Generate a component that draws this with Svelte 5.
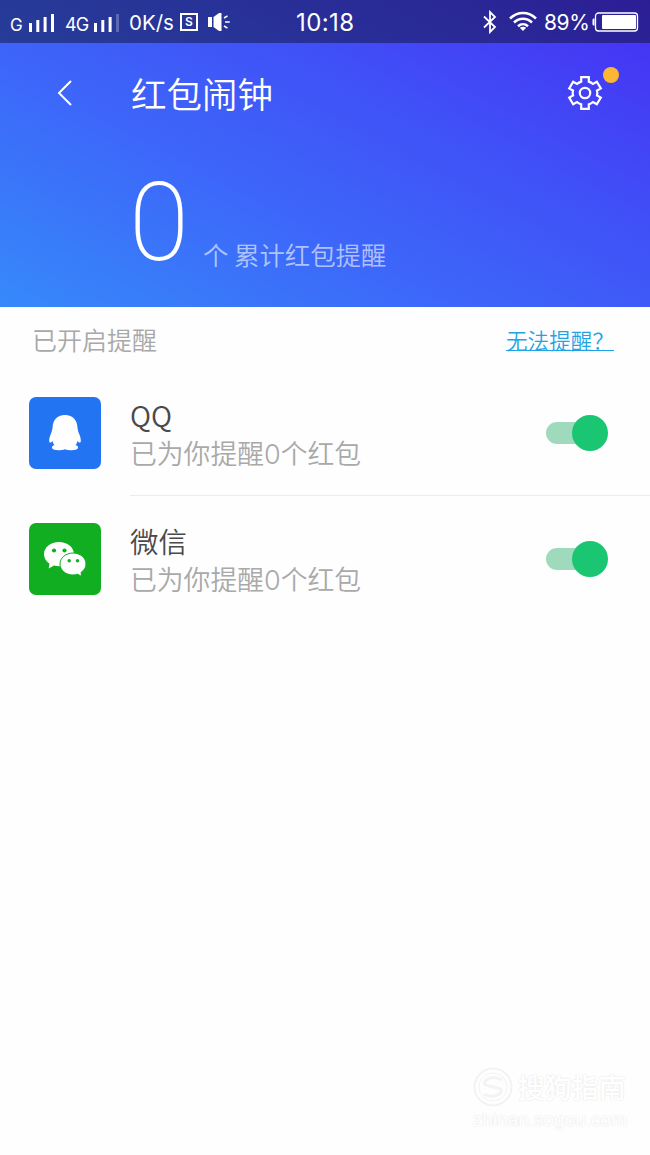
<script lang="ts">
	type App = {
		id: string;
		name: string;
		count: number;
		enabled: boolean;
	};

	let apps = $state<App[]>([
		{ id: 'qq', name: 'QQ', count: 0, enabled: true },
		{ id: 'wechat', name: '微信', count: 0, enabled: true }
	]);

	const total = $derived(apps.reduce((sum, app) => sum + app.count, 0));

	function toggle(app: App) {
		app.enabled = !app.enabled;
	}
</script>

<div class="screen">
	<header class="hero">
		<div class="status-bar">
			<div class="status-left">
				<span class="network">G</span>
				<svg class="signal" width="26" height="18" viewBox="0 0 26 18" fill="#fff">
					<rect x="0" y="9" width="3" height="9" />
					<rect x="7.3" y="6" width="3" height="12" />
					<rect x="14.6" y="3" width="3" height="15" />
					<rect x="22" y="0" width="3" height="18" />
				</svg>
				<span class="network lte">4G</span>
				<svg class="signal" width="26" height="18" viewBox="0 0 26 18" fill="#fff">
					<rect x="0" y="9" width="3" height="9" />
					<rect x="7.3" y="6" width="3" height="12" />
					<rect x="14.6" y="3" width="3" height="15" />
					<rect x="22" y="0" width="3" height="18" opacity="0.25" />
				</svg>
				<span class="speed">0K/s</span>
				<span class="badge-s">S</span>
				<svg class="speaker" width="24" height="20" viewBox="0 0 24 20">
					<path d="M1 5H5V15H1zM6.500 5L12 1H14.500V19H12L6.500 15z" fill="#fff" />
					<path d="M17 6L20.500 3.800M18 10H22.800M17 14L20.500 16.200" stroke="#fff" stroke-width="1.5" />
				</svg>
			</div>
			<span class="clock">10:18</span>
			<div class="status-right">
				<svg width="14" height="24" viewBox="0 0 14 24" fill="none" stroke="#fff" stroke-width="1.8">
					<path d="M1 6.5L12 17L7 22V2L12 7L1 17.5" />
				</svg>
				<svg class="wifi" width="28" height="21" viewBox="0 0 28 21" fill="none" stroke="#fff" stroke-width="2.5">
					<path d="M1 7.5C8.5 0.2 19.5 0.2 27 7.5" />
					<path d="M5 11.5C10.3 6.5 17.7 6.5 23 11.5" />
					<path d="M9 15.2C12 12.5 16 12.5 19 15.2" />
					<path d="M10.8 16.8Q14 14.5 17.2 16.8L14 20z" fill="#fff" stroke="none" />
				</svg>
				<span class="percent">89%</span>
				<svg class="battery" width="47" height="20" viewBox="0 0 47 20">
					<path d="M2.5 6.5H1.5Q0.5 6.5 0.5 8V12Q0.5 13.5 1.5 13.5H2.5z" fill="#fff" />
					<rect x="3.5" y="1" width="42" height="18" rx="3" fill="none" stroke="#fff" stroke-width="1.3" />
					<rect x="10" y="3" width="34" height="14" rx="1" fill="#fff" />
				</svg>
			</div>
		</div>

		<div class="title-bar">
			<button class="back" aria-label="返回">
				<svg width="16" height="26" viewBox="0 0 16 26" fill="none" stroke="#fff" stroke-width="2">
					<path d="M15 1L3 13L15 25" />
				</svg>
			</button>
			<h1>红包闹钟</h1>
			<button class="settings" aria-label="设置">
				<svg width="36" height="36" viewBox="0 0 36 36" fill="none" stroke="#fff" stroke-width="2.2">
					<path
						d="M14.2 2.2H21.8V6.6Q24.2 7.4 26 9L29.8 6.8L33.8 13.4L30 15.6Q30.7 18 30 20.4L33.8 22.6L29.8 29.2L26 27Q24.2 28.6 21.8 29.4V33.8H14.2V29.4Q11.8 28.6 10 27L6.2 29.2L2.2 22.6L6 20.4Q5.3 18 6 15.6L2.2 13.4L6.2 6.8L10 9Q11.8 7.4 14.2 6.6z"
					/>
					<circle cx="18" cy="18" r="5.2" />
				</svg>
				<span class="dot"></span>
			</button>
		</div>

		<div class="summary">
			<span class="total">{total}</span>
			<span class="caption">个 累计红包提醒</span>
		</div>
	</header>

	<div class="section-head">
		<span>已开启提醒</span>
		<a href="#help">无法提醒？</a>
	</div>

	<ul class="apps">
		{#each apps as app (app.id)}
			<li>
				<div class="app-icon {app.id}">
					{#if app.id === 'qq'}
						<svg width="32" height="36" viewBox="0 0 32 36" fill="#fff">
							<path
								d="M16 0C8 0 4 5.300 3.600 12C3.400 15 2.600 17 1.400 20C0 23.500-0.200 27 0.900 27.600C1.900 28 2.800 26.500 3.500 26C4 28 4.500 29 5.500 30C3.500 30.500 2.600 31.700 3 33C4 36 12.500 35.500 16 34.200C19.500 35.500 28 36 29 33C29.400 31.700 28.500 30.500 26.500 30C27.500 29 28 28 28.500 26C29.200 26.500 30.100 28 31.100 27.600C32.200 27 32 23.500 30.600 20C29.400 17 28.600 15 28.400 12C28 5.300 24 0 16 0z"
							/>
						</svg>
					{:else}
						<svg width="42" height="36" viewBox="0 0 42 36">
							<g fill="#fff">
								<path d="M15 1C6.7 1 0 6.4 0 13.3C0 17.2 2.1 20.5 5.5 22.7L4.7 27.5L10 24.5C11.6 25 13.2 25.3 15 25.3C23.3 25.3 30 20.2 30 13.3C30 6.4 23.3 1 15 1z" />
								<path
									d="M29 12C21.8 12 16 16.8 16 23S21.8 34 29 34C30.7 34 32.3 33.7 33.7 33.2L37.7 35.5L37 31.5C40 29.5 42 26.5 42 23C42 16.8 36.2 12 29 12z"
									stroke="#11ae21"
									stroke-width="1"
								/>
							</g>
							<g fill="#11ae21">
								<circle cx="10" cy="9.5" r="2.1" />
								<circle cx="20.5" cy="9.5" r="2.1" />
								<circle cx="25.2" cy="19.7" r="1.7" />
								<circle cx="33.5" cy="19.7" r="1.7" />
							</g>
						</svg>
					{/if}
				</div>
				<div class="app-body">
					<div class="app-text">
						<span class="app-name">{app.name}</span>
						<span class="app-desc">已为你提醒<span class="count">{app.count}</span>个红包</span>
					</div>
					<button
						class="switch"
						class:on={app.enabled}
						role="switch"
						aria-checked={app.enabled}
						aria-label={app.name}
						onclick={() => toggle(app)}
					>
						<span class="thumb"></span>
					</button>
				</div>
			</li>
		{/each}
	</ul>

	<footer class="watermark">
		<div class="brand">
			<svg width="40" height="40" viewBox="0 0 40 40" fill="none" stroke="#f3f3f3" stroke-width="2">
				<circle cx="20" cy="20" r="18.5" />
				<circle cx="20" cy="20" r="14" stroke-width="1" />
				<path d="M29 13Q20 8 13.5 13T20 20T26 27T11 27" stroke-width="3" />
			</svg>
			<span>搜狗指南</span>
		</div>
		<span class="site">zhinan.sogou.com</span>
	</footer>
</div>

<style>
	:global(body) {
		margin: 0;
		background: #fefefe;
	}

	.screen {
		display: flex;
		flex-direction: column;
		box-sizing: border-box;
		width: 650px;
		height: 1155px;
		overflow: hidden;
		background: #fefefe;
		font-family: 'Noto Sans CJK SC', sans-serif;
		font-weight: 350;
	}

	button {
		display: flex;
		padding: 0;
		border: none;
		background: none;
		cursor: pointer;
	}

	.hero {
		height: 307px;
		flex-shrink: 0;
		background: linear-gradient(28deg, #3689fa 0%, #3d66f9 38%, #4050f7 65%, #462ff3 100%);
		color: #fff;
	}

	.status-bar {
		display: grid;
		grid-template-columns: 296px 1fr auto;
		height: 43px;
		background: rgba(10, 10, 25, 0.43);
		font-family: Inter, sans-serif;
		font-weight: 400;
		line-height: 24px;
	}

	.status-left,
	.status-right {
		display: flex;
		align-items: center;
		height: 43px;
		white-space: nowrap;
	}

	.status-left {
		padding-left: 10px;
	}

	.status-right {
		padding-right: 11px;
	}

	.network {
		width: 19px;
		padding-top: 7px;
		font-size: 17px;
	}

	.lte {
		width: 29px;
		margin-left: 10px;
		font-size: 18px;
		letter-spacing: -0.8px;
	}

	.signal {
		margin-top: 3px;
	}

	.speed {
		width: 51px;
		margin-left: 9px;
		padding-top: 2px;
		font-size: 20.5px;
	}

	.badge-s {
		width: 14px;
		height: 14px;
		margin-top: 1px;
		border: 2px solid #fff;
		font-size: 12px;
		font-weight: 600;
		line-height: 14px;
		text-align: center;
	}

	.speaker {
		margin-left: 9px;
	}

	.clock {
		font-size: 24px;
		letter-spacing: 0.4px;
		line-height: 46px;
	}

	.wifi {
		margin-left: 12px;
	}

	.percent {
		width: 44px;
		margin: 2px 4px 0 7px;
		font-size: 21px;
		letter-spacing: -0.4px;
	}

	.title-bar {
		display: flex;
		align-items: center;
		height: 100px;
		padding: 0 47px 0 56px;
	}

	h1 {
		flex: 1;
		margin: 0 0 0 59px;
		font-size: 35.5px;
		font-weight: 350;
		line-height: 50px;
	}

	.settings {
		position: relative;
	}

	.dot {
		position: absolute;
		top: -8px;
		right: -16px;
		width: 16px;
		height: 16px;
		border-radius: 50%;
		background: #fdb535;
	}

	.summary {
		display: flex;
		align-items: flex-end;
		height: 137px;
		padding-left: 129px;
	}

	.total {
		width: 74px;
		font-family: Roboto, sans-serif;
		font-size: 109px;
		font-weight: 200;
		line-height: 114px;
	}

	.caption {
		padding-bottom: 6px;
		color: rgba(255, 255, 255, 0.6);
		font-size: 25.4px;
		line-height: 40px;
	}

	.section-head {
		display: flex;
		align-items: center;
		justify-content: space-between;
		height: 64px;
		padding: 0 36px 0 32px;
		color: #a8a8a8;
		font-size: 25px;
	}

	.section-head a {
		color: #1fa5e6;
		font-size: 21.6px;
		text-decoration-thickness: 1px;
		text-underline-offset: 1px;
	}

	.apps {
		margin: -1px 0 0;
		padding: 0;
		list-style: none;
	}

	.apps li {
		display: flex;
		align-items: center;
		height: 126px;
		padding-left: 29px;
	}

	.app-icon {
		display: flex;
		align-items: center;
		justify-content: center;
		width: 72px;
		height: 72px;
		margin-right: 29px;
		border-radius: 7px;
	}

	.qq {
		background: #2374f2;
	}

	.wechat {
		background: #11ae21;
	}

	.app-body {
		display: flex;
		flex: 1;
		align-items: center;
		justify-content: space-between;
		box-sizing: border-box;
		height: 126px;
		padding-right: 42px;
		border-bottom: 1px solid #ededed;
	}

	.apps li:last-child .app-body {
		border-bottom-color: transparent;
	}

	.app-text {
		display: flex;
		flex-direction: column;
		padding-top: 3px;
	}

	.app-name {
		color: #4a4a4a;
		font-size: 28.5px;
		line-height: 38px;
	}

	.app-desc {
		color: #a9a9a9;
		font-size: 26.8px;
		line-height: 38px;
	}

	.count {
		font-family: Inter, sans-serif;
		font-size: 27px;
		font-weight: 300;
		line-height: 1;
	}

	.switch {
		align-items: center;
		width: 62px;
		height: 36px;
	}

	.switch::before {
		content: '';
		width: 50px;
		height: 22px;
		margin-right: -24px;
		border-radius: 11px;
		background: #d0d0d0;
	}

	.thumb {
		width: 36px;
		height: 36px;
		border-radius: 50%;
		background: #f1f1f1;
	}

	.switch.on::before {
		background: #9fdabd;
	}

	.switch.on .thumb {
		background: #1bc673;
	}

	.watermark {
		display: flex;
		flex-direction: column;
		margin: auto 23px 22px auto;
		color: #fff;
		text-shadow: 0 0 2px #ddd;
	}

	.brand {
		display: flex;
		align-items: center;
		gap: 5px;
		font-size: 27px;
		font-weight: 500;
		line-height: 40px;
	}

	.site {
		font-family: 'Liberation Sans', sans-serif;
		font-size: 19px;
		font-weight: 400;
		line-height: 26px;
	}
</style>
